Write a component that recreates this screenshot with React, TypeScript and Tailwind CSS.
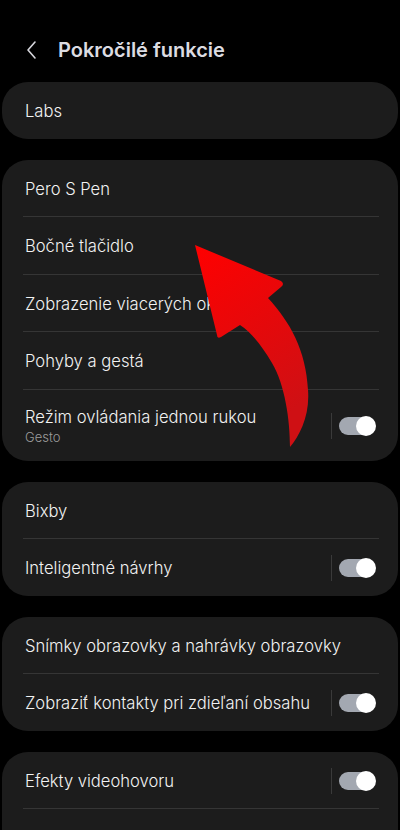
import React from 'react';

type Row = { label: string; sub?: string; toggle?: boolean; tall?: boolean };

const groups: Row[][] = [
    [{ label: 'Labs' }],
    [
        { label: 'Pero S Pen' },
        { label: 'Bočné tlačidlo' },
        { label: 'Zobrazenie viacerých okien' },
        { label: 'Pohyby a gestá' },
        { label: 'Režim ovládania jednou rukou', sub: 'Gesto', toggle: true, tall: true },
    ],
    [{ label: 'Bixby' }, { label: 'Inteligentné návrhy', toggle: true }],
    [
        { label: 'Snímky obrazovky a nahrávky obrazovky' },
        { label: 'Zobraziť kontakty pri zdieľaní obsahu', toggle: true },
    ],
    // second row of the last card is below the fold
    [{ label: 'Efekty videohovoru', toggle: true }, { label: '' }],
];

const Toggle: React.FC = () => (
    <div className="flex items-center shrink-0">
        <div className="w-px h-[26px] bg-[#3a3a3a] mr-[7px]" />
        <div className="relative w-[36px] h-[18px] rounded-full bg-[#a3a8b1]">
            <div className="absolute right-[-1px] top-[-1px] w-[20px] h-[20px] rounded-full bg-white" />
        </div>
    </div>
);

const SettingRow: React.FC<{ row: Row }> = ({ row }) => (
    <div
        className={`flex items-center justify-between pl-[23px] pr-[23px] pt-[2px] ${row.tall ? 'h-[71px]' : 'h-[56.5px]'}`}
    >
        <div className="flex flex-col min-w-0">
            <span className="text-[16.6px] leading-[22px] font-[350] text-[#f2f2f2] whitespace-nowrap">{row.label}</span>
            {row.sub && <span className="text-[13px] leading-[18px] font-[350] text-[#9d9d9d]">{row.sub}</span>}
        </div>
        {row.toggle && <Toggle />}
    </div>
);

const RedArrow: React.FC = () => (
    <svg className="absolute inset-0 pointer-events-none" width="400" height="830" viewBox="0 0 400 830">
        <defs>
            <linearGradient id="arrowRed" x1="0" y1="0" x2="0.4" y2="1">
                <stop offset="0" stopColor="#ff0000" />
                <stop offset="1" stopColor="#cf1014" />
            </linearGradient>
        </defs>
        <path
            d="M195,245 L281,281 Q285,284 281,287 L268,298 C290,322 306,350 308,390 C310,415 300,435 290,447 C290,420 285,385 272,363 C262,346 252,333 240,325 L221,337 Q217,339 217,335 Z"
            fill="url(#arrowRed)"
        />
    </svg>
);

export default function App() {
    return (
        <div
            className="relative w-[400px] h-[830px] overflow-hidden bg-black"
            style={{ fontFamily: 'Inter, Roboto, sans-serif' }}
        >
            <div className="flex items-center h-[82px] pt-[18px] pl-[24px]">
                <svg width="16" height="20" viewBox="0 0 16 20" className="shrink-0">
                    <path d="M11,2 L4,10 L11,18" fill="none" stroke="#d6d6dc" strokeWidth="1.6" strokeLinecap="round" strokeLinejoin="round" />
                </svg>
                <h1 className="ml-[18px] text-[20px] font-semibold text-[#dcdce2]">Pokročilé funkcie</h1>
            </div>
            <div className="flex flex-col gap-[21px] px-[2px]">
                {groups.map((g, gi) => (
                    <div key={gi} className="bg-[#1c1c1c] rounded-[26px] flex flex-col">
                        {g.map((row, ri) => (
                            <React.Fragment key={ri}>
                                {ri > 0 && <div className="h-px bg-[#353535] ml-[21px] mr-[19px]" />}
                                <SettingRow row={row} />
                            </React.Fragment>
                        ))}
                    </div>
                ))}
            </div>
            <RedArrow />
        </div>
    );
}
